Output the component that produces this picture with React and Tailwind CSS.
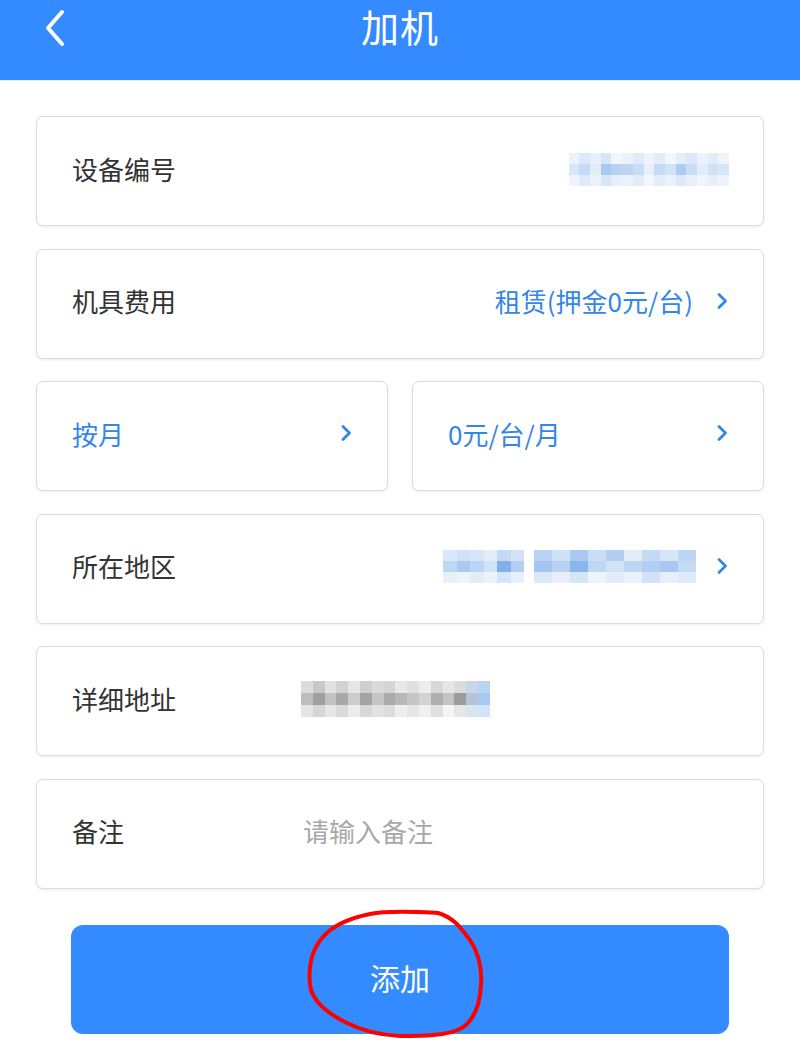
import React from "react";

const FONT = { fontFamily: '"Noto Sans CJK SC", "Noto Sans", sans-serif' };

// pixelated (mosaic) placeholders for the blurred values in the screenshot
const idMosaic = [
  ["bg-[#eaf2fc]", "bg-[#dce9f9]", "bg-[#e6effb]", "bg-[#d6e6f9]", "bg-[#f1f6fd]", "bg-[#eaf2fc]", "bg-[#dfeafa]", "bg-[#eef4fc]", "bg-[#e3edfa]", "bg-[#f2f7fd]", "bg-[#e4eefb]", "bg-[#dce8f8]", "bg-[#eaf2fc]", "bg-[#e1ecfa]", "bg-[#eef4fc]"],
  ["bg-[#d9e7f8]", "bg-[#c4daf5]", "bg-[#e2edfa]", "bg-[#a9c9f0]", "bg-[#b7d2f3]", "bg-[#bcd5f3]", "bg-[#c9ddf6]", "bg-[#e8f0fb]", "bg-[#c4daf5]", "bg-[#d2e3f7]", "bg-[#afcdf1]", "bg-[#c9ddf6]", "bg-[#e3edfa]", "bg-[#cfe1f7]", "bg-[#d6e6f9]"],
  ["bg-[#eef4fc]", "bg-[#dfeafa]", "bg-[#eaf2fc]", "bg-[#d8e7f8]", "bg-[#e6effb]", "bg-[#eaf2fc]", "bg-[#e1ecfa]", "bg-[#f3f7fd]", "bg-[#e2edfa]", "bg-[#eaf2fc]", "bg-[#dce9f9]", "bg-[#e6effb]", "bg-[#f0f5fc]", "bg-[#e6effb]", "bg-[#eef4fc]"],
];

const areaMosaicA = [
  ["bg-[#dbe8f9]", "bg-[#cfe1f7]", "bg-[#d6e6f9]", "bg-[#e3edfa]", "bg-[#c4daf5]", "bg-[#d2e3f7]"],
  ["bg-[#c0d7f4]", "bg-[#a9c9f0]", "bg-[#bcd5f3]", "bg-[#d2e3f7]", "bg-[#7fb0ea]", "bg-[#b2cff2]"],
  ["bg-[#e6effb]", "bg-[#eef4fc]", "bg-[#e3edfa]", "bg-[#eaf2fc]", "bg-[#d6e6f9]", "bg-[#e6effb]"],
];
const areaMosaicB = [
  ["bg-[#b7d2f3]", "bg-[#cfe1f7]", "bg-[#a9c9f0]", "bg-[#c9ddf6]", "bg-[#b2cff2]", "bg-[#e3edfa]", "bg-[#c4daf5]", "bg-[#d6e6f9]", "bg-[#bcd5f3]"],
  ["bg-[#a5c6ef]", "bg-[#b7d2f3]", "bg-[#8ab6ec]", "bg-[#c0d7f4]", "bg-[#d2e3f7]", "bg-[#bcd5f3]", "bg-[#b2cff2]", "bg-[#a9c9f0]", "bg-[#c4daf5]"],
  ["bg-[#dbe8f9]", "bg-[#e6effb]", "bg-[#d6e6f9]", "bg-[#eef4fc]", "bg-[#e3edfa]", "bg-[#eaf2fc]", "bg-[#d2e3f7]", "bg-[#e6effb]", "bg-[#dfeafa]"],
];

const addrMosaic = [
  ["bg-[#dcdcdc]", "bg-[#c8c8c8]", "bg-[#e2e2e2]", "bg-[#d2d2d2]", "bg-[#e6e6e6]", "bg-[#cfcfcf]", "bg-[#dadada]", "bg-[#d5d5d5]", "bg-[#e8e8e8]", "bg-[#e0e0e0]", "bg-[#ececec]", "bg-[#d8d8d8]", "bg-[#e6e6e6]", "bg-[#dcdcdc]", "bg-[#c8d6ea]", "bg-[#b9d3f3]"],
  ["bg-[#bdbdbd]", "bg-[#9f9f9f]", "bg-[#c2c2c2]", "bg-[#a8a8a8]", "bg-[#cccccc]", "bg-[#a3a3a3]", "bg-[#c6c6c6]", "bg-[#ababab]", "bg-[#b8b8b8]", "bg-[#c6c6c6]", "bg-[#d2d2d2]", "bg-[#aeaeae]", "bg-[#c4c4c4]", "bg-[#9c9c9c]", "bg-[#b4c3d8]", "bg-[#a8c8f0]"],
  ["bg-[#e4e4e4]", "bg-[#d6d6d6]", "bg-[#e6e6e6]", "bg-[#dadada]", "bg-[#ececec]", "bg-[#d8d8d8]", "bg-[#e2e2e2]", "bg-[#dcdcdc]", "bg-[#eeeeee]", "bg-[#e6e6e6]", "bg-[#f0f0f0]", "bg-[#e0e0e0]", "bg-[#f4f4f4]", "bg-[#e6e6e6]", "bg-[#dbe5f2]", "bg-[#d3e4f9]"],
];

function Mosaic({ rows, cell }) {
  return (
    <div className="flex flex-col">
      {rows.map((row, i) => (
        <div key={i} className="flex">
          {row.map((c, j) => (
            <div key={j} className={`${cell} ${c}`} />
          ))}
        </div>
      ))}
    </div>
  );
}

function Chevron() {
  return (
    <svg width="12" height="18" viewBox="0 0 12 18" className="shrink-0">
      <path d="M3 2.5 L9.5 9 L3 15.5" fill="none" stroke="#3486e8" strokeWidth="2.8" strokeLinecap="round" strokeLinejoin="round" />
    </svg>
  );
}

function Card({ children, className = "" }) {
  return (
    <div className={`h-[110px] bg-white border border-[#dcdcdc] rounded-[7px] shadow-[0_1px_3px_rgba(0,0,0,0.08)] flex items-center px-[35px] pb-[6px] ${className}`}>
      {children}
    </div>
  );
}

export default function App() {
  return (
    <div className="w-[800px] min-h-[1044px] bg-white" style={FONT}>
      {/* header */}
      <div className="h-[81px] bg-[#348bff] border-b border-[#e6e6e6] relative flex items-start justify-center">
        <svg width="24" height="40" viewBox="0 0 24 40" className="absolute left-[42px] top-[8px]">
          <path d="M20 4 L6 20 L20 36" fill="none" stroke="white" strokeWidth="4" strokeLinecap="round" strokeLinejoin="round" />
        </svg>
        <div className="text-white text-[38px] leading-none mt-[7px] tracking-[1px]">加机</div>
      </div>

      <div className="flex flex-col gap-[22.6px] px-[36px] pt-[35px]">
        <Card className="justify-between">
          <span className="text-[26px] text-[#333]">设备编号</span>
          <div className="mr-[-1px] mt-[2px]">
            <Mosaic rows={idMosaic} cell="w-[10.7px] h-[11px]" />
          </div>
        </Card>

        <Card className="justify-between">
          <span className="text-[26px] text-[#333]">机具费用</span>
          <div className="flex items-center gap-[23px]">
            <span className="text-[26px] text-[#3486e8]">租赁(押金0元/台)</span>
            <Chevron />
          </div>
        </Card>

        <div className="flex gap-[24px]">
          <Card className="flex-1 justify-between">
            <span className="text-[26px] text-[#3486e8]">按月</span>
            <Chevron />
          </Card>
          <Card className="flex-1 justify-between">
            <span className="text-[26px] text-[#3486e8]">0元/台/月</span>
            <Chevron />
          </Card>
        </div>

        <Card className="justify-between">
          <span className="text-[26px] text-[#333]">所在地区</span>
          <div className="flex items-center gap-[20px]">
            <div className="flex gap-[10px] mt-[2px]">
              <Mosaic rows={areaMosaicA} cell="w-[13.5px] h-[11px]" />
              <Mosaic rows={areaMosaicB} cell="w-[18px] h-[11px]" />
            </div>
            <Chevron />
          </div>
        </Card>

        <Card>
          <span className="text-[26px] text-[#333] w-[229px]">详细地址</span>
          <div className="mt-[2px]">
            <Mosaic rows={addrMosaic} cell="w-[11.8px] h-[12px]" />
          </div>
        </Card>

        <Card>
          <span className="text-[26px] text-[#333] w-[231px]">备注</span>
          <span className="text-[26px] text-[#a8a8a8]">请输入备注</span>
        </Card>
      </div>

      {/* submit */}
      <div className="px-[71px] pt-[36px] pb-[10px]">
        <div className="relative h-[109px] bg-[#348bff] rounded-[12px] flex items-center justify-center">
          <span className="text-white text-[30px] mb-[4px]">添加</span>
          <svg width="190" height="140" viewBox="300 905 190 140" className="absolute left-[229px] top-[-20px]">
            <path
              d="M370 914 C390 910 420 912 438 913 C455 918 462 930 470 940 C480 955 482 970 481 985 C480 1005 474 1020 462 1028 C448 1036 420 1036 400 1036 C380 1035 360 1030 345 1022 C325 1012 312 1000 310 985 C308 965 312 950 322 938 C332 926 350 918 370 914 Z"
              fill="none"
              stroke="#ff0000"
              strokeWidth="4"
              strokeLinejoin="round"
            />
          </svg>
        </div>
      </div>
    </div>
  );
}
